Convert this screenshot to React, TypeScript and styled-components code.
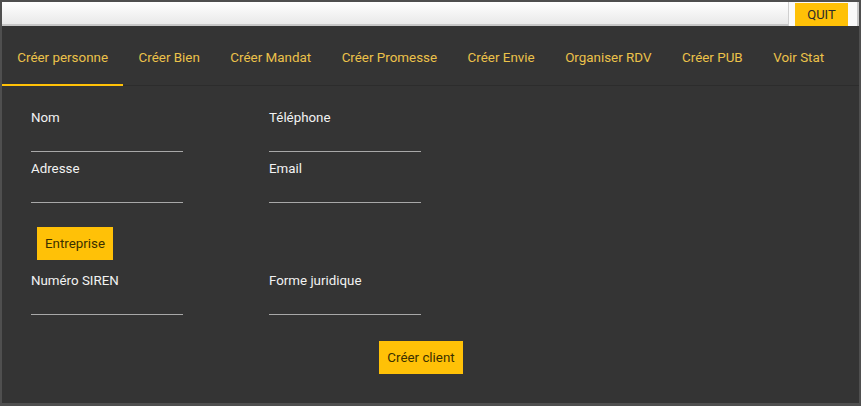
import React from "react";
import styled, { createGlobalStyle } from "styled-components";

const Global = createGlobalStyle`
  html, body { margin: 0; padding: 0; background: #4b4b4b; }
  body { font-family: Roboto, "Liberation Sans", sans-serif; }
  * { box-sizing: border-box; }
`;

const Frame = styled.div`
  width: 861px;
  height: 406px;
  border: 2px solid #4f4f4f;
  border-bottom-width: 3px;
  background: #343434;
  display: flex;
  flex-direction: column;
  overflow: hidden;
`;

const TopBar = styled.div`
  height: 24px;
  display: flex;
  background: linear-gradient(#ffffff, #e9e9e9);
  border-bottom: 2px solid #c6c6c6;
`;

const Spacer = styled.div`
  flex: 1;
`;

const QuitWrap = styled.div`
  display: flex;
  align-items: stretch;
  background: #fafafa;
  border-left: 1px solid #cfcfcf;
  border-right: 2px solid #c9c9c9;
  padding: 1px 9px 0 6px;
  margin-bottom: -2px;
`;

const QuitButton = styled.button`
  border: none;
  background: #ffc107;
  color: #2b2b2b;
  font-family: Roboto, "Liberation Sans", sans-serif;
  font-size: 13px;
  padding: 0 10px;
  width: 53px;
  cursor: pointer;
`;

const Tabs = styled.nav`
  display: flex;
  height: 60px;
  border-bottom: 1px solid #2c2c2c;
`;

const Tab = styled.div<{ $active?: boolean }>`
  display: flex;
  align-items: center;
  padding: 5px 15.25px 0;
  font-size: 13.4px;
  color: #ecc24a;
  border-bottom: 2px solid ${(p) => (p.$active ? "#ffc107" : "transparent")};
  margin-bottom: -1px;
  white-space: nowrap;
`;

const Content = styled.div`
  padding: 24px 0 0 29px;
  display: flex;
  flex-direction: column;
`;

const Grid = styled.div`
  display: grid;
  grid-template-columns: 152px 152px;
  column-gap: 86px;
  row-gap: 9px;
`;

const Field = styled.label`
  display: flex;
  flex-direction: column;
  height: 42px;
  color: #f2f2f2;
  font-size: 13.33px;
`;

const LabelText = styled.span`
  line-height: 16px;
`;

const Input = styled.div`
  flex: 1;
  border-bottom: 1px solid #a8a8a8;
`;

const YellowButton = styled.button<{ $width: number }>`
  width: ${(p) => p.$width}px;
  height: 33px;
  border: none;
  background: #ffc107;
  color: #3a3000;
  font-family: Roboto, "Liberation Sans", sans-serif;
  font-size: 13.33px;
  padding: 0;
  cursor: pointer;
`;

const EntrepriseRow = styled.div`
  margin: 24px 0 13px 6px;
`;

const SubmitRow = styled.div`
  margin: 26px 0 0 348px;
`;

const tabs = [
  "Créer personne",
  "Créer Bien",
  "Créer Mandat",
  "Créer Promesse",
  "Créer Envie",
  "Organiser RDV",
  "Créer PUB",
  "Voir Stat",
];

const F = ({ label }: { label: string }) => (
  <Field>
    <LabelText>{label}</LabelText>
    <Input />
  </Field>
);

export default function App() {
  return (
    <>
      <Global />
      <Frame>
        <TopBar>
          <Spacer />
          <QuitWrap>
            <QuitButton>QUIT</QuitButton>
          </QuitWrap>
        </TopBar>
        <Tabs>
          {tabs.map((t, i) => (
            <Tab key={t} $active={i === 0}>
              {t}
            </Tab>
          ))}
        </Tabs>
        <Content>
          <Grid>
            <F label="Nom" />
            <F label="Téléphone" />
            <F label="Adresse" />
            <F label="Email" />
          </Grid>
          <EntrepriseRow>
            <YellowButton $width={76}>Entreprise</YellowButton>
          </EntrepriseRow>
          <Grid>
            <F label="Numéro SIREN" />
            <F label="Forme juridique" />
          </Grid>
          <SubmitRow>
            <YellowButton $width={84}>Créer client</YellowButton>
          </SubmitRow>
        </Content>
      </Frame>
    </>
  );
}
